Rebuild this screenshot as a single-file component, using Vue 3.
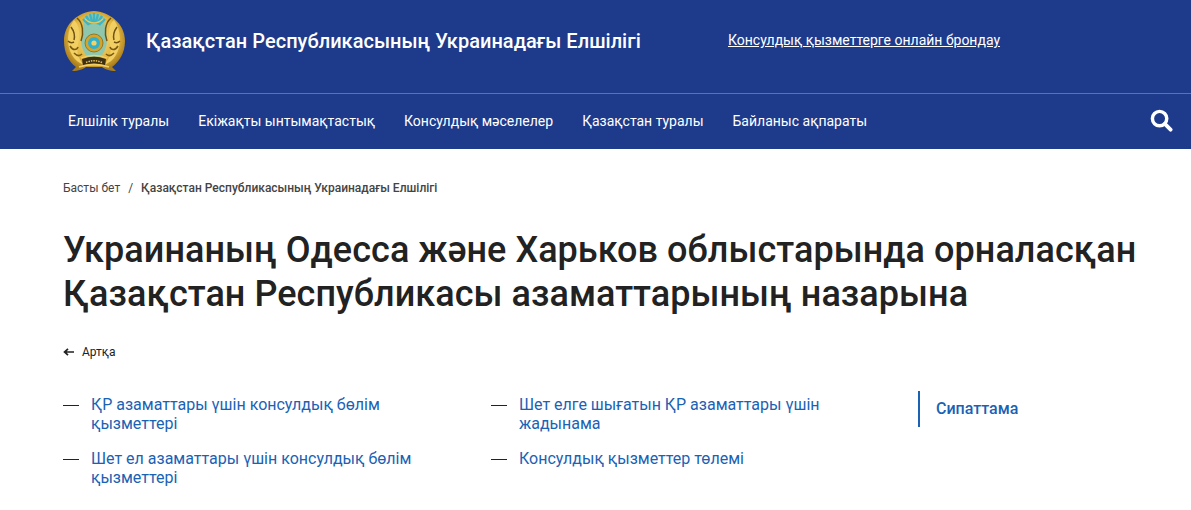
<script setup>
const navItems = ['Елшілік туралы', 'Екіжақты ынтымақтастық', 'Консулдық мәселелер', 'Қазақстан туралы', 'Байланыс ақпараты']
const col1 = ['ҚР азаматтары үшін консулдық бөлім қызметтері', 'Шет ел азаматтары үшін консулдық бөлім қызметтері']
const col2 = ['Шет елге шығатын ҚР азаматтары үшін жадынама', 'Консулдық қызметтер төлемі']
</script>

<template>
  <div class="page">
    <header class="top">
      <div class="brand">
        <svg class="emblem" viewBox="0 0 64 64" width="64" height="64">
          <defs>
            <radialGradient id="gold" cx="50%" cy="45%" r="55%">
              <stop offset="0" stop-color="#f6df8a"/>
              <stop offset="0.7" stop-color="#e3b63e"/>
              <stop offset="1" stop-color="#a97c1c"/>
            </radialGradient>
          </defs>
          <path d="M31 2 C46 3 62 14 62 32 C62 44 56 53 49 58 L53 62 C46 62 42 60 39 58 L23 58 C20 60 16 62 9 62 L13 58 C6 53 1 44 1 32 C1 14 16 3 31 2Z" fill="url(#gold)"/>
          <path d="M31 5 C24 5 22 7 20 10 C22 16 18 24 18 31 C18 42 25 50 31 52 C37 50 44 42 44 31 C44 24 40 16 42 10 C40 7 38 5 31 5Z" fill="#8fc7ae"/>
          <path d="M20 10 L26 16 M23 7 L28 15 M27 5 L29.500 15 M31 4 V15 M35 5 L32.500 15 M39 7 L34 15 M42 10 L36 16" stroke="#3eb5c4" stroke-width="2.400"/>
          <path d="M22 10 Q31 18 40 10" fill="none" stroke="#e9c855" stroke-width="1.200"/>
          <path d="M11 11 C4 20 3 36 9 46 C12 51 16 54 21 56 C16 50 13 44 15 36 C17 26 17 16 11 11Z" fill="#f2cf62"/>
          <path d="M51 11 C58 20 59 36 53 46 C50 51 46 54 41 56 C46 50 49 44 47 36 C45 26 45 16 51 11Z" fill="#f2cf62"/>
          <path d="M14 9 C20 14 21 24 18 32 M48 9 C42 14 41 24 44 32 M8 18 C11 22 12 27 11 31 M54 18 C51 22 50 27 51 31 M5 32 C7 34 9 34 11 33 M57 32 C55 34 53 34 51 33" fill="none" stroke="#6f5212" stroke-width="1.500"/>
          <path d="M7 37 C10 42 14 41 15 38 M55 37 C52 42 48 41 47 38 M11 44 C14 47 17 47 19 45 M51 44 C48 47 45 47 43 45" fill="none" stroke="#7a5a14" stroke-width="1.600"/>
          <circle cx="31" cy="34" r="9" fill="#d5a52b" stroke="#8a6615" stroke-width=".8"/>
          <circle cx="31" cy="34" r="6" fill="#2fb0cf"/>
          <circle cx="31" cy="34" r="2.600" fill="#f3d266"/>
          <path d="M19 50 Q31 45 43 50 L42 57 Q31 53 20 57Z" fill="#3d2f12"/>
          <path d="M18 49 Q31 44 44 49" fill="none" stroke="#f3d266" stroke-width="1.300"/>
          <path d="M23 53.500 Q31 50 39 53.500" fill="none" stroke="#e7c75a" stroke-width="1.500" stroke-dasharray="1.500 1"/>
          <path d="M16 58 Q31 53 46 58" fill="none" stroke="#f2cf62" stroke-width="1.800"/>
        </svg>
        <span class="title">Қазақстан Республикасының Украинадағы Елшілігі</span>
      </div>
      <a class="booking">Консулдық қызметтерге онлайн брондау</a>
    </header>
    <nav class="nav">
      <div class="nav-links">
        <a v-for="item in navItems" :key="item" class="nav-link">{{ item }}</a>
      </div>
      <svg class="search" viewBox="0 0 24 24" width="23" height="23">
        <circle cx="10" cy="10" r="7.500" fill="none" stroke="#fff" stroke-width="3.600"/>
        <path d="M15.500 15.500 L21.500 21.500" stroke="#fff" stroke-width="4" stroke-linecap="round"/>
      </svg>
    </nav>
    <main class="main">
      <div class="crumbs">
        <span>Басты бет</span><span class="sep">/</span><span class="current">Қазақстан Республикасының Украинадағы Елшілігі</span>
      </div>
      <h1 class="heading">Украинаның Одесса және Харьков облыстарында орналасқан Қазақстан Республикасы азаматтарының назарына</h1>
      <a class="back">
        <svg viewBox="0 0 11 8" width="11" height="8"><path d="M11 4 H2 M5 .8 L1.500 4 L5 7.200" fill="none" stroke="#222" stroke-width="1.700"/></svg>
        <span>Артқа</span>
      </a>
      <div class="content">
        <ul class="list">
          <li v-for="t in col1" :key="t"><a>{{ t }}</a></li>
        </ul>
        <ul class="list">
          <li v-for="t in col2" :key="t"><a>{{ t }}</a></li>
        </ul>
        <div class="aside"><a>Сипаттама</a></div>
      </div>
    </main>
  </div>
</template>

<style>
html, body { margin: 0; background: #fff; overflow: hidden; }
</style>

<style scoped>
.page { width: 1191px; height: 510px; font-family: Roboto, "Liberation Sans", sans-serif; color: #222; overflow: hidden; }
.top { height: 93px; background: #1e3a8a; display: flex; align-items: flex-start; padding: 8px 0 0 63px; box-sizing: border-box; color: #fff; }
.brand { display: flex; align-items: center; width: 665px; height: 66px; flex: none; }
.emblem { flex: none; }
.title { margin-left: 19px; font-size: 20px; font-weight: 500; letter-spacing: .02px; }
.booking { font-size: 14px; line-height: 64px; text-decoration: underline; color: #fff; }
.nav { height: 56px; background: #1e3a8a; border-top: 1px solid #5a73b0; box-sizing: border-box; display: flex; align-items: center; justify-content: space-between; padding: 0 18px 2px 68px; }
.nav-links { display: flex; gap: 29px; }
.nav-link { color: #fff; font-size: 14px; }
.main { padding: 31px 40px 0 63px; }
.crumbs { font-size: 12px; line-height: 16px; color: #444; display: flex; }
.sep { margin: 0 8px; }
.current { font-weight: 500; }
.heading { margin: 32px 0 0; font-size: 36px; line-height: 44px; font-weight: 500; color: #222; letter-spacing: .05px; }
.back { display: flex; align-items: center; gap: 8px; margin-top: 28px; font-size: 12px; line-height: 16px; color: #222; }
.content { display: flex; margin-top: 35px; }
.list { list-style: none; margin: 0; padding: 0; width: 428px; flex: none; }
.list li { position: relative; padding-left: 28px; width: 340px; font-size: 16px; line-height: 19.2px; color: #1a62b4; margin-bottom: 15.6px; }
.list li::before { content: ""; position: absolute; left: 0; top: 10px; width: 16px; height: 1px; background: #222; }
.aside { margin: -4px 0 0 -1px; height: 36px; border-left: 2px solid #1a62b4; padding-left: 16px; font-size: 16px; font-weight: 500; line-height: 36px; color: #1a62b4; }
</style>
